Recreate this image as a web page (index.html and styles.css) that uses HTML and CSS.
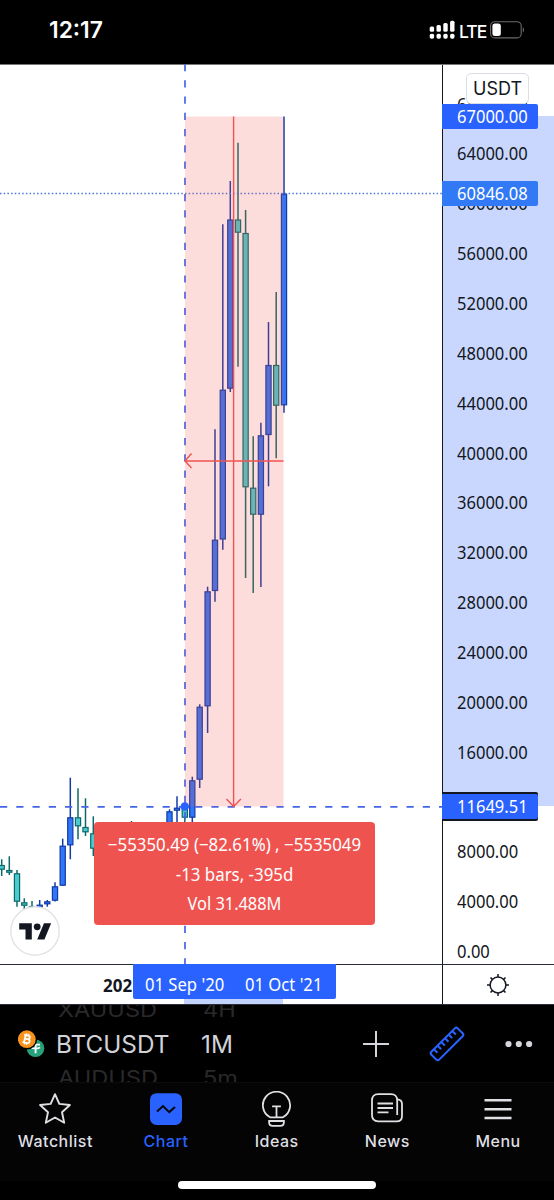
FILE: index.html
```html
<!DOCTYPE html>
<html lang="en">
<head>
<meta charset="utf-8">
<title>BTCUSDT chart</title>
<link rel="stylesheet" href="styles.css">
</head>
<body>
<div class="phone">
  <header class="status">
    <span class="clock">12:17</span>
    <div class="status-right">
      <svg width="27" height="20" viewBox="0 0 27 20" fill="#fff">
        <rect x="0.7" y="6.5" width="4.4" height="5.3" rx="1.5"/><rect x="7.5" y="5" width="4.4" height="6.8" rx="1.5"/><rect x="14.3" y="3" width="4.4" height="8.8" rx="1.5"/><rect x="21.1" y="0.8" width="4.4" height="11" rx="1.5"/>
        <rect x="0.7" y="13.8" width="4.4" height="5" rx="1.7"/><rect x="7.5" y="13.8" width="4.4" height="5" rx="1.7"/><rect x="14.3" y="13.8" width="4.4" height="5" rx="1.7"/><rect x="21.1" y="13.8" width="4.4" height="5" rx="1.7"/>
      </svg>
      <span class="net">LTE</span>
      <svg width="35" height="18" viewBox="0 0 35 18">
        <rect x="0.6" y="0.7" width="30.6" height="16.2" rx="4.2" fill="none" stroke="#6b6b6b" stroke-width="1.1"/>
        <rect x="2.4" y="2.5" width="8.4" height="12.6" rx="2.5" fill="#fff"/>
        <path d="M32.8 6.2c1.6.8 1.6 4.4 0 5.2z" fill="#6b6b6b"/>
      </svg>
    </div>
  </header>

  <main class="chart">
    <section class="plot">
      <svg id="candles" width="442" height="900" viewBox="0 64 442 900"></svg>
      <div class="measure">
        <p class="m1">−55350.49 (−82.61%) , −5535049</p>
        <p class="m2">-13 bars, -395d</p>
        <p class="m3">Vol 31.488M</p>
      </div>
      <svg class="tv" width="50" height="50" viewBox="0 0 50 50">
        <circle cx="25" cy="25" r="24.2" fill="#fff" stroke="#e2e3e8" stroke-width="1.4"/>
        <g transform="translate(9.2 13.6) scale(.9)" fill="#131722"><path d="M14 22H7V11H0V4h14v18zM28 22h-8l7.5-18h8L28 22z"/><circle cx="20" cy="8" r="3.8"/></g>
      </svg>
    </section>
    <aside class="prices">
      <div class="range"></div>
      <ol class="ticks">
        <li>68000.00</li><li>64000.00</li><li>60000.00</li><li>56000.00</li><li>52000.00</li><li>48000.00</li><li>44000.00</li><li>40000.00</li><li>36000.00</li><li>32000.00</li><li>28000.00</li><li>24000.00</li><li>20000.00</li><li>16000.00</li><li></li><li>8000.00</li><li>4000.00</li><li>0.00</li>
      </ol>
      <div class="unit">USDT</div>
      <div class="tag high"><span>67000.00</span></div>
      <div class="tag last"><span>60846.08</span></div>
      <div class="tag low"><span>11649.51</span></div>
    </aside>
    <section class="dates">
      <b>2021</b>
      <div class="date-range"></div>
      <div class="date-tag"><span class="d1">01 Sep '20</span><span class="d2">01 Oct '21</span></div>
    </section>
    <section class="gear">
      <svg width="24" height="24" viewBox="0 0 24 24" fill="none" stroke="#131722" stroke-width="1.5"><circle cx="12" cy="12" r="7.9"/><path d="M12 4V1M12 20v3M4 12H1M20 12h3M6.4 6.4 4.5 4.5M17.6 6.4l1.9-1.9M6.4 17.6l-1.9 1.9M17.6 17.6l1.9 1.9"/></svg>
    </section>
  </main>

  <section class="toolbar">
    <svg class="coins" width="27" height="28" viewBox="0 0 27 28">
      <circle cx="17.5" cy="18.2" r="8.8" fill="#26a17b"/>
      <path d="M13 14.6h9M17.6 14.6v8.6M13.2 17.4c1.5 1.5 7.3 1.5 8.8 0" stroke="#fff" stroke-width="1.9" fill="none"/>
      <circle cx="8.8" cy="9.2" r="10.4" fill="#000"/>
      <circle cx="8.8" cy="9.2" r="8.9" fill="#f7931a"/>
      <g transform="rotate(13 8.8 9.2)" fill="none" stroke="#fff"><path d="M6.8 5.4v7.6M5.2 5.4h4.3c2.5 0 2.5 3.5 0 3.5H7M5.2 13h4.7c2.9 0 2.9-4.1 0-4.1" stroke-width="1.8"/><path d="M7.6 3.6v2M9.7 3.6v2M7.6 13v1.9M9.7 13v1.9" stroke-width="1.1"/></g>
    </svg>
    <div class="wheel symbol"><span class="faded">XAUUSD</span><span>BTCUSDT</span><span class="faded">AUDUSD</span></div>
    <div class="wheel interval"><span class="faded">4H</span><span>1M</span><span class="faded">5m</span></div>
    <svg class="plus" width="26" height="26" viewBox="0 0 26 26" stroke="#d5d6dc" stroke-width="2"><path d="M13 0v26M0 13h26"/></svg>
    <svg class="ruler" width="36" height="36" viewBox="0 0 36 36" fill="none" stroke="#2962ff" stroke-width="2.1"><g transform="rotate(-45 18 18)"><rect x="-.6" y="12.5" width="37.2" height="11" rx="2"/><path d="M5 12.5v5M10.2 12.5v5M15.4 12.5v5M20.6 12.5v5M25.8 12.5v5M31 12.5v5"/></g></svg>
    <svg class="dots" width="28" height="8" viewBox="0 0 28 8" fill="#d5d6dc"><circle cx="3.5" cy="4" r="3.1"/><circle cx="13.8" cy="4" r="3.1"/><circle cx="24.1" cy="4" r="3.1"/></svg>
  </section>

  <nav class="tabs">
    <a><svg width="34" height="36" viewBox="0 0 34 36" fill="none" stroke="#e0e0e4" stroke-width="1.9"><path d="M17 3.2l4.3 9.7 10.6 1.1-7.9 7.2 2.2 10.6-9.2-5.3-9.2 5.3L10 21.200 2.100 14l10.600-1.100z" stroke-linejoin="round"/></svg><span>Watchlist</span></a>
    <a class="on"><svg width="34" height="36" viewBox="0 0 34 36"><rect x="1" y="2.200" width="32" height="31.800" rx="6.500" fill="#2962ff"/><path d="M8 20.500l6-5.400 6.200 6 5.800-5" fill="none" stroke="#05070d" stroke-width="2"/></svg><span>Chart</span></a>
    <a><svg width="34" height="36" viewBox="0 0 34 36" fill="none" stroke="#e0e0e4" stroke-width="1.800"><path d="M10.100 26.300a13.600 13.600 0 1 1 12.800 0zM16.500 26v-10.600M12.100 15.400h8.800M9.100 30h14.800v1.200q0 3.600-3.600 3.600h-7.600q-3.600 0-3.600-3.600z"/></svg><span>Ideas</span></a>
    <a><svg width="34" height="36" viewBox="0 0 34 36" fill="none" stroke="#e0e0e4" stroke-width="1.800"><path d="M27.200 24V9.500q0-6.300-6.300-6.300H8.300Q2 3.200 2 9.500v14.600q0 6.300 6.300 6.300h18.200q5.500 0 5.500-5.500V13q0-4.200-4.800-4.600M7.500 12.500h15.500M7.500 17h15.500M7.500 21.400h11" /></svg><span>News</span></a>
    <a><svg width="34" height="36" viewBox="0 0 34 36" stroke="#e0e0e4" stroke-width="2.500"><path d="M3.500 9.300h27M3.500 18.200h27M3.500 27h27"/></svg><span>Menu</span></a>
  </nav>
  <div class="home"></div>
</div>
<script src="chart.js"></script>
</body>
</html>
```

FILE: styles.css
```css
* { box-sizing: border-box; }
body { margin: 0; background: #000; font-family: Inter, "Liberation Sans", sans-serif; }
.phone { width: 554px; height: 1200px; display: flex; flex-direction: column; background: #000; position: relative; overflow: hidden; }
svg { display: block; flex: none; }

.status { height: 64px; flex: none; display: flex; justify-content: space-between; padding: 0 29px 0 49px; color: #fff; }
.clock { font-size: 22.800px; font-weight: 600; line-height: 60px; }
.status-right { display: flex; align-items: center; height: 60px; }
.net { font-size: 17.500px; margin: 3px 2px 0 3px; letter-spacing: -.9px; width: 29px; font-weight: 500; }

.chart { height: 941px; flex: none; display: grid; grid-template-columns: 442px 112px; grid-template-rows: 899px 40px; background: #fff; border-top: 1px solid #777; border-bottom: 1px solid #2a2e39; color: #131722; font-family: "Noto Sans", sans-serif; font-size: 17.500px; }
.plot, .prices, .dates { position: relative; }
.plot svg:first-child { margin-top: -1px; }
.measure { position: absolute; left: 94px; top: 757px; width: 281px; height: 103px; border-radius: 4px; background: #ef5350; color: #fff; padding-top: 8px; }
.measure p { margin: 0; line-height: 29.500px; text-align: center; white-space: nowrap; }
.measure .m1 { transform: scaleX(.963); margin: 0 -10px; }
.m2 { transform: scaleX(.963); }
.m3 { transform: scaleX(.935); }
.tv { position: absolute; left: 10px; top: 841px; }

.prices { border-left: 1.500px solid #131722; }
.range { position: absolute; left: 0; right: 0; top: 51px; height: 690px; background: #c9d7ff; }
.ticks { list-style: none; margin: 0; padding: 14.500px 0 0 13.500px; position: relative; height: 899px; }
.ticks li { height: 49.870px; line-height: 49.870px; transform: scaleX(.945); transform-origin: left; }
.unit { position: absolute; left: 23px; top: 8px; width: 63px; height: 31px; border: 1.500px solid #dcdee6; border-radius: 5px; background: #fff; font: 18px/29px Inter, sans-serif; text-align: center; }
.tag { position: absolute; left: -1px; width: 96px; height: 25px; padding-left: 14.500px; line-height: 25px; color: #fff; border-radius: 0 2px 2px 0; background: #2962ff; }
.tag span { display: inline-block; transform: scaleX(.945); transform-origin: left; }
.high { top: 39px; }
.last { top: 116px; background: #3179f5; }
.low { top: 729px; box-shadow: 0 2px #131722, 0 -2px #131722; }

.dates { border-top: 1.500px solid #2a2e39; padding: 7px 0 0 103px; line-height: 26px; }
.dates b { display: inline-block; transform: scaleX(.97); transform-origin: left; }
.date-range { position: absolute; left: 184px; top: 33px; width: 99px; height: 6px; background: #c4d3fb; }
.date-tag { position: absolute; left: 133px; top: -1px; width: 203px; height: 35px; padding: 0 0 0 12px; border-radius: 0 0 2px 2px; background: #2962ff; color: #fff; display: flex; line-height: 40px; white-space: nowrap; }
.date-tag span { flex: none; width: 99.500px; transform: scaleX(.95); transform-origin: left; }
.gear { border-top: 1.500px solid #2a2e39; border-left: 1.500px solid #131722; display: flex; justify-content: center; align-items: center; padding-right: 2px; }
.date-tag .d2 { margin-left: 0; }

.toolbar { height: 78px; flex: none; display: flex; align-items: center; padding: 0 21px 0 18px; border-bottom: 1px solid #0c0c0e; overflow: hidden; color: #d1d3d8; font-size: 24.300px; }
.wheel { height: 78px; display: flex; flex-direction: column; justify-content: center; }
.wheel span { flex: none; height: 34px; line-height: 34px; white-space: nowrap; }
.wheel .faded { color: #29292b; transform: scale(.97, .82); transform-origin: left; padding-left: 2px; }
.symbol { width: 118px; margin-left: 11px; }
.interval { width: 60px; margin-left: 27px; }
.plus { margin-left: 102px; }
.ruler { margin-left: 40px; }
.dots { margin-left: auto; }

.tabs { display: grid; grid-template-columns: repeat(5, 110.700px); height: 98px; background: #040404; padding-top: 8px; }
.tabs a { display: flex; flex-direction: column; align-items: center; color: #dedfe3; font-size: 16px; font-weight: 500; letter-spacing: .5px; line-height: 20px; gap: 4px; }
.tabs .on { color: #2962ff; }
.home { width: 198px; height: 8px; border-radius: 4px; background: #fff; margin: 0 auto; }
```

FILE: chart.js
```js
const NS = 'http://www.w3.org/2000/svg';
const svg = document.getElementById('candles');

function add(name, attrs) {
  const el = document.createElementNS(NS, name);
  for (const key in attrs) el.setAttribute(key, attrs[key]);
  svg.appendChild(el);
}

// centre, high, body top, body bottom, low, rising
const candles = [
  [1.700, 859.300, 865, 869.700, 876, 0],
  [9.300, 856.300, 870, 872.700, 875, 0],
  [17, 870, 873.300, 901.700, 906.700, 0],
  [24.300, 898.300, 902.300, 905.700, 909, 0],
  [32, 901, 906, 907.500, 908, 0],
  [39.700, 900, 904.700, 907.700, 908, 1],
  [47.300, 900, 901.300, 904.300, 906.700, 1],
  [55, 882.300, 886.300, 900.700, 901.500, 1],
  [62.700, 838.700, 845.700, 885.700, 886, 1],
  [70.300, 777.700, 817.300, 845.300, 859.300, 1],
  [78, 788.300, 817.300, 826.300, 839.300, 0],
  [85.500, 798.300, 827, 832.300, 836, 0],
  [93.300, 816.300, 833.300, 848.700, 856, 0],
  [131.500, 821, 830, 840, 845, 0],
  [169.500, 809.300, 811.300, 830, 835, 1],
  [177, 796.300, 807.700, 810.700, 830, 1],
  [184.800, 806, 807, 817.700, 830, 0],
  [192.300, 776.700, 780.300, 817.700, 830, 1],
  [199.700, 704.300, 706.700, 779.700, 788, 1],
  [207.600, 586.700, 591.300, 706.300, 733, 1],
  [215, 429.300, 539.700, 591, 601.700, 1],
  [222.800, 224.300, 389.700, 539.500, 549.700, 1],
  [230.300, 181, 219.500, 388.700, 392, 1],
  [238, 142.700, 219.500, 232.700, 366.700, 0],
  [245.600, 210, 233, 487.300, 578, 0],
  [253.200, 436.300, 487.700, 514.700, 593, 0],
  [260.900, 422.700, 435.300, 514.700, 587, 1],
  [268.500, 322, 365, 435, 486.300, 1],
  [276.200, 292, 365, 405.700, 458.300, 0],
  [284, 116.500, 193.700, 405.300, 412.700, 1]
];

for (const [x, high, top, bottom, low, up] of candles) {
  const edge = up ? '#123ba4' : '#0b6a68';
  add('line', { x1: x, x2: x, y1: high, y2: low, stroke: edge, 'stroke-width': 1.500 });
  add('rect', { x: x - 2.600, y: top + .5, width: 5.200, height: Math.max(bottom - top - 1, .8), fill: up ? '#2f76f8' : '#4bcbd0', stroke: edge, 'stroke-width': 1.200 });
}

const blue = '#4664e8';
const red = '#ef5350';
// crosshair and last price
add('line', { x1: 185, x2: 185, y1: 64, y2: 964, stroke: blue, 'stroke-width': 1.700, 'stroke-dasharray': '7.200 9.060' });
add('line', { x1: 0, x2: 442, y1: 806.800, y2: 806.800, stroke: blue, 'stroke-width': 1.700, 'stroke-dasharray': '7.200 9.060' });
add('line', { x1: 0, x2: 442, y1: 193.500, y2: 193.500, stroke: '#4a77df', 'stroke-width': 1.300, 'stroke-dasharray': '1.500 2.200' });
// measured range
add('rect', { x: 185, y: 116.500, width: 98.500, height: 690, fill: 'rgba(239,83,80,.2)' });
add('path', { d: 'M233.600 116.500V806M226.500 799l7.100 7.500 7.300-7.500M283.500 461H185M191.500 453.500l-6.500 7.500 6.500 7', fill: 'none', stroke: red, 'stroke-width': 1.400 });
add('circle', { cx: 184.800, cy: 806.500, r: 4.300, fill: '#2962ff' });
```
